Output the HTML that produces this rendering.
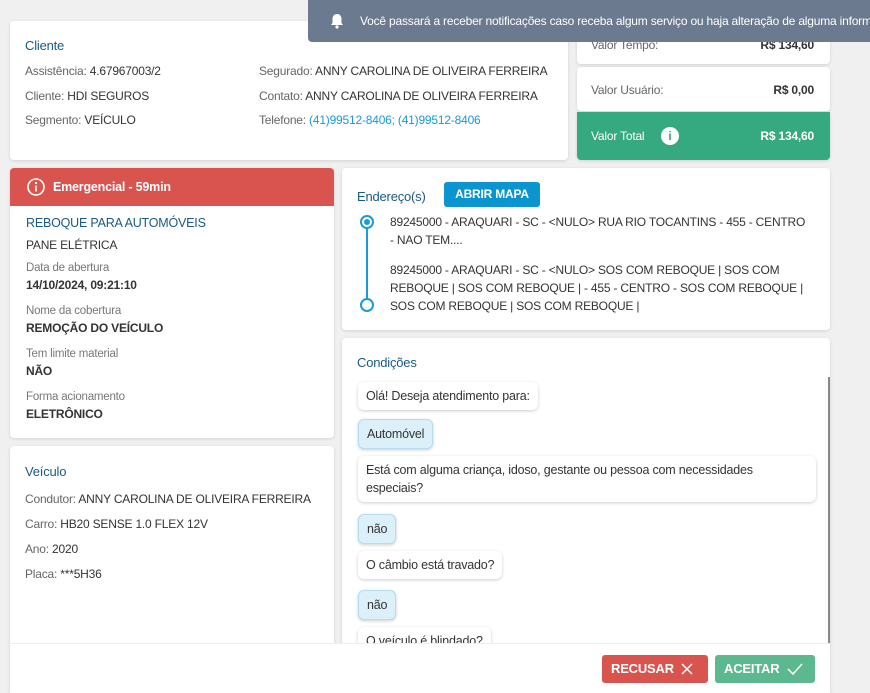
<!DOCTYPE html>
<html style="overflow:hidden;height:693px"><head><meta charset="utf-8"><style>
*{box-sizing:border-box;margin:0;padding:0}
body{width:870px;height:693px;background:#f0f0f0;font-family:"Liberation Sans",sans-serif;font-size:12px;color:#333;position:relative;overflow:hidden;letter-spacing:-0.2px}
.card{position:absolute;background:#fff;border-radius:4px;box-shadow:0 1px 3px rgba(0,0,0,.12)}
.t{position:absolute;white-space:nowrap}
.h{color:#1a5a85;font-size:13px}
.g{color:#666}
.lbl{color:#777;font-size:11.5px}
.b{font-weight:bold;color:#333}
.bub{position:absolute;left:16px;background:#fff;border-radius:6px;box-shadow:0 1px 3px rgba(0,0,0,.2);padding:5px 8px;font-size:12.5px;white-space:nowrap;line-height:18px}
.ans{background:#dcf0fa;border:1px solid #b5dcef}
</style></head><body>

<div class="card" style="left:10px;top:21px;width:558px;height:139px">
 <div class="t h" style="left:15px;top:17px">Cliente</div>
 <div class="t" style="left:15px;top:43px"><span class="g">Assistência:</span> 4.67967003/2</div>
 <div class="t" style="left:15px;top:68px"><span class="g">Cliente:</span> HDI SEGUROS</div>
 <div class="t" style="left:15px;top:92px"><span class="g">Segmento:</span> VEÍCULO</div>
 <div class="t" style="left:249px;top:43px;font-size:12px"><span class="g">Segurado:</span> ANNY CAROLINA DE OLIVEIRA FERREIRA</div>
 <div class="t" style="left:249px;top:68px;font-size:12px"><span class="g">Contato:</span> ANNY CAROLINA DE OLIVEIRA FERREIRA</div>
 <div class="t" style="left:249px;top:92px;font-size:12px"><span class="g">Telefone:</span> <span style="color:#1a9ad6">(41)99512-8406; (41)99512-8406</span></div>
</div>

<div class="card" style="left:577px;top:10px;width:253px;height:54px">
 <div class="t g" style="left:14px;top:28px">Valor Tempo:</div>
 <div class="t b" style="right:16px;top:28px">R$ 134,60</div>
</div>
<div class="card" style="left:577px;top:67px;width:253px;height:44px">
 <div class="t g" style="left:14px;top:16px">Valor Usuário:</div>
 <div class="t b" style="right:16px;top:16px">R$ 0,00</div>
</div>
<div class="card" style="left:577px;top:112px;width:253px;height:48px;background:#35a97f;border-radius:0 0 4px 4px">
 <div class="t" style="left:14px;top:17px;color:#fff">Valor Total</div>
 <div class="t" style="left:84px;top:15px;width:18px;height:18px;border-radius:50%;background:#fff;color:#35a97f;font-weight:bold;text-align:center;line-height:18px;font-size:12px">i</div>
 <div class="t" style="right:16px;top:17px;color:#fff;font-weight:bold">R$ 134,60</div>
</div>

<div style="position:absolute;left:308px;top:0;width:562px;height:42px;background:#6b7a8f;border-radius:0 0 0 4px">
 <svg style="position:absolute;left:22px;top:13px" width="14" height="16" viewBox="0 0 14 16"><path d="M7 1c-3 0-4.5 2.3-4.5 5v4L1 12h12l-1.5-2V6C11.5 3.3 10 1 7 1z" fill="#fff"/><circle cx="7" cy="14" r="1.6" fill="#fff"/></svg>
 <div class="t" style="left:52px;top:14px;color:#fff;font-size:12px;letter-spacing:-0.2px">Você passará a receber notificações caso receba algum serviço ou haja alteração de alguma informação</div>
</div>

<div class="card" style="left:10px;top:168px;width:324px;height:270px">
 <div style="position:absolute;left:0;top:0;width:324px;height:38px;background:#d9534f;border-radius:4px 4px 0 0"></div>
 <svg style="position:absolute;left:16px;top:9px" width="20" height="20" viewBox="0 0 20 20"><circle cx="10" cy="10" r="8" fill="none" stroke="#fff" stroke-width="1.6"/><rect x="9.2" y="8.5" width="1.6" height="6" fill="#fff"/><circle cx="10" cy="6" r="1.1" fill="#fff"/></svg>
 <div class="t" style="left:43px;top:12px;color:#fff;font-weight:bold;font-size:12.5px">Emergencial - 59min</div>
 <div class="t h" style="left:16px;top:48px;font-size:12.5px">REBOQUE PARA AUTOMÓVEIS</div>
 <div class="t" style="left:16px;top:70px">PANE ELÉTRICA</div>
 <div class="t lbl" style="left:16px;top:94px">Data de abertura</div>
 <div class="t b" style="left:16px;top:110px">14/10/2024, 09:21:10</div>
 <div class="t lbl" style="left:16px;top:137px">Nome da cobertura</div>
 <div class="t b" style="left:16px;top:153px">REMOÇÃO DO VEÍCULO</div>
 <div class="t lbl" style="left:16px;top:180px">Tem limite material</div>
 <div class="t b" style="left:16px;top:196px">NÃO</div>
 <div class="t lbl" style="left:16px;top:223px">Forma acionamento</div>
 <div class="t b" style="left:16px;top:239px">ELETRÔNICO</div>
</div>

<div class="card" style="left:10px;top:446px;width:324px;height:247px;border-radius:4px 4px 0 0">
 <div class="t h" style="left:15px;top:18px">Veículo</div>
 <div class="t" style="left:15px;top:46px;font-size:12px"><span class="g">Condutor:</span> ANNY CAROLINA DE OLIVEIRA FERREIRA</div>
 <div class="t" style="left:15px;top:71px"><span class="g">Carro:</span> HB20 SENSE 1.0 FLEX 12V</div>
 <div class="t" style="left:15px;top:96px"><span class="g">Ano:</span> 2020</div>
 <div class="t" style="left:15px;top:121px"><span class="g">Placa:</span> ***5H36</div>
</div>

<div class="card" style="left:342px;top:168px;width:488px;height:162px">
 <div class="t h" style="left:15px;top:21px">Endereço(s)</div>
 <div style="position:absolute;left:102px;top:14px;width:96px;height:25px;background:#0a94d0;border-radius:3px;color:#fff;font-weight:bold;text-align:center;line-height:25px;font-size:12px">ABRIR MAPA</div>
 <div style="position:absolute;left:24px;top:56px;width:2px;height:80px;background:#1a9ad6"></div>
 <div style="position:absolute;left:18px;top:47px;width:14px;height:14px;border:2px solid #1a9ad6;border-radius:50%;background:#fff"><div style="margin:2px;width:6px;height:6px;border-radius:50%;background:#1a9ad6"></div></div>
 <div style="position:absolute;left:18px;top:130px;width:14px;height:14px;border:2px solid #1a9ad6;border-radius:50%;background:#fff"></div>
 <div class="t" style="left:48px;top:45px;line-height:18px;font-size:12px">89245000 - ARAQUARI - SC - &lt;NULO&gt; RUA RIO TOCANTINS - 455 - CENTRO<br>- NAO TEM....</div>
 <div class="t" style="left:48px;top:93px;line-height:18px;font-size:12px">89245000 - ARAQUARI - SC - &lt;NULO&gt; SOS COM REBOQUE | SOS COM<br>REBOQUE | SOS COM REBOQUE | - 455 - CENTRO - SOS COM REBOQUE |<br>SOS COM REBOQUE | SOS COM REBOQUE |</div>
</div>

<div class="card" style="left:342px;top:338px;width:488px;height:355px;overflow:hidden;border-radius:4px 4px 0 0">
 <div class="t h" style="left:15px;top:17px">Condições</div>
 <div style="position:absolute;left:486px;top:39px;width:2px;height:266px;background:#888"></div>
 <div class="bub" style="top:44px">Olá! Deseja atendimento para:</div>
 <div class="bub ans" style="top:81px">Automóvel</div>
 <div class="bub" style="top:118px;width:458px;white-space:normal">Está com alguma criança, idoso, gestante ou pessoa com necessidades especiais?</div>
 <div class="bub ans" style="top:176px">não</div>
 <div class="bub" style="top:213px">O câmbio está travado?</div>
 <div class="bub ans" style="top:252px">não</div>
 <div class="bub" style="top:289px">O veículo é blindado?</div>
</div>

<div style="position:absolute;left:10px;top:643px;width:820px;height:50px;background:#fff;border-top:1px solid #eee"></div>
<div style="position:absolute;left:602px;top:655px;width:106px;height:28px;background:#d9534f;border-radius:3px;color:#fff;font-weight:bold;font-size:13px;line-height:28px;padding-left:9px">RECUSAR
 <svg style="position:absolute;left:79px;top:8px" width="12" height="12" viewBox="0 0 12 12"><path d="M1 1L11 11M11 1L1 11" stroke="#fff" stroke-width="1.5"/></svg></div>
<div style="position:absolute;left:715px;top:655px;width:100px;height:28px;background:#5cb98f;border-radius:3px;color:#fff;font-weight:bold;font-size:13px;line-height:28px;padding-left:9px">ACEITAR
 <svg style="position:absolute;left:72px;top:8px" width="16" height="12" viewBox="0 0 16 12"><path d="M1 6L6 11L15 1" stroke="#fff" stroke-width="1.5" fill="none"/></svg></div>
</body></html>
